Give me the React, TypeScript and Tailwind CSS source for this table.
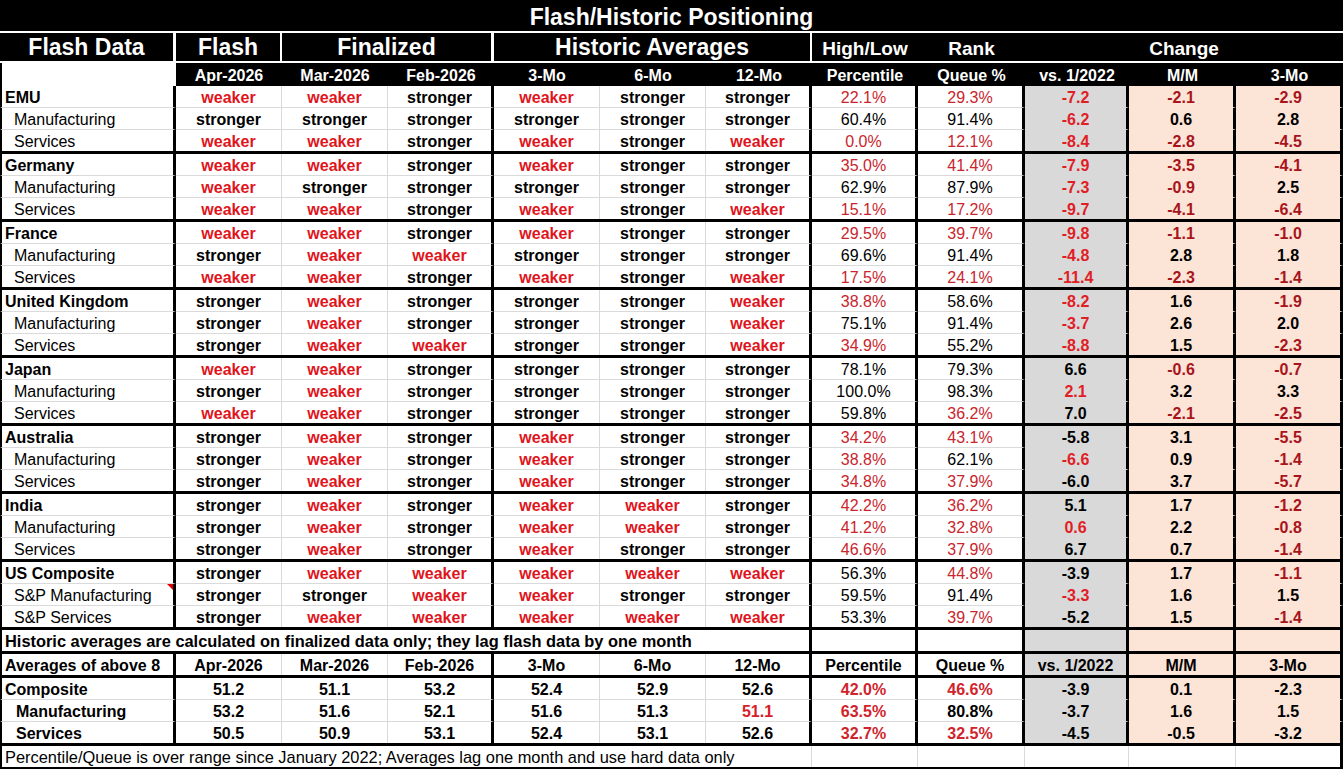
import React from 'react'

// signal codes: s = stronger, w = weaker; a trailing * marks a red number
type Row = [string, string, string, string, string, string, string]

const groups: Row[][] = [
  [
    ['EMU', 'wwswss', '22.1%*', '29.3%*', '-7.2*', '-2.1*', '-2.9*'],
    ['Manufacturing', 'ssssss', '60.4%', '91.4%', '-6.2*', '0.6', '2.8'],
    ['Services', 'wwswsw', '0.0%*', '12.1%*', '-8.4*', '-2.8*', '-4.5*'],
  ],
  [
    ['Germany', 'wwswss', '35.0%*', '41.4%*', '-7.9*', '-3.5*', '-4.1*'],
    ['Manufacturing', 'wsssss', '62.9%', '87.9%', '-7.3*', '-0.9*', '2.5'],
    ['Services', 'wwswsw', '15.1%*', '17.2%*', '-9.7*', '-4.1*', '-6.4*'],
  ],
  [
    ['France', 'wwswss', '29.5%*', '39.7%*', '-9.8*', '-1.1*', '-1.0*'],
    ['Manufacturing', 'swwsss', '69.6%', '91.4%', '-4.8*', '2.8', '1.8'],
    ['Services', 'wwswsw', '17.5%*', '24.1%*', '-11.4*', '-2.3*', '-1.4*'],
  ],
  [
    ['United Kingdom', 'swsssw', '38.8%*', '58.6%', '-8.2*', '1.6', '-1.9*'],
    ['Manufacturing', 'swsssw', '75.1%', '91.4%', '-3.7*', '2.6', '2.0'],
    ['Services', 'swwssw', '34.9%*', '55.2%', '-8.8*', '1.5', '-2.3*'],
  ],
  [
    ['Japan', 'wwssss', '78.1%', '79.3%', '6.6', '-0.6*', '-0.7*'],
    ['Manufacturing', 'swssss', '100.0%', '98.3%', '2.1*', '3.2', '3.3'],
    ['Services', 'wwssss', '59.8%', '36.2%*', '7.0', '-2.1*', '-2.5*'],
  ],
  [
    ['Australia', 'swswss', '34.2%*', '43.1%*', '-5.8', '3.1', '-5.5*'],
    ['Manufacturing', 'swswss', '38.8%*', '62.1%', '-6.6*', '0.9', '-1.4*'],
    ['Services', 'swswss', '34.8%*', '37.9%*', '-6.0', '3.7', '-5.7*'],
  ],
  [
    ['India', 'swswws', '42.2%*', '36.2%*', '5.1', '1.7', '-1.2*'],
    ['Manufacturing', 'swswws', '41.2%*', '32.8%*', '0.6*', '2.2', '-0.8*'],
    ['Services', 'swswss', '46.6%*', '37.9%*', '6.7', '0.7', '-1.4*'],
  ],
  [
    ['US Composite', 'swwwww', '56.3%', '44.8%*', '-3.9', '1.7', '-1.1*'],
    ['S&P Manufacturing', 'sswwss', '59.5%', '91.4%', '-3.3*', '1.6', '1.5'],
    ['S&P Services', 'swwwww', '53.3%', '39.7%*', '-5.2', '1.5', '-1.4*'],
  ],
]

const averages: [string, string[]][] = [
  ['Composite', ['51.2', '51.1', '53.2', '52.4', '52.9', '52.6', '42.0%*', '46.6%*', '-3.9', '0.1', '-2.3']],
  ['Manufacturing', ['53.2', '51.6', '52.1', '51.6', '51.3', '51.1*', '63.5%*', '80.8%', '-3.7', '1.6', '1.5']],
  ['Services', ['50.5', '50.9', '53.1', '52.4', '53.1', '52.6', '32.7%*', '32.5%*', '-4.5', '-0.5', '-3.2']],
]

const subHeads = ['Apr-2026', 'Mar-2026', 'Feb-2026', '3-Mo', '6-Mo', '12-Mo', 'Percentile', 'Queue %', 'vs. 1/2022', 'M/M', '3-Mo']

const gridCols = 'grid grid-cols-[176px_106px_106px_106px_106px_106px_106px_106px_107px_104px_107px_107px]'

const rightBorder = [
  'border-l-2 border-l-black border-r-[3px] border-r-black',
  'border-r border-r-[#d9d9d9]',
  'border-r border-r-[#d9d9d9]',
  'border-r-[3px] border-r-black',
  'border-r border-r-[#d9d9d9]',
  'border-r border-r-[#d9d9d9]',
  'border-r-[3px] border-r-black',
  'border-r-[3px] border-r-black',
  'border-r-[3px] border-r-black',
  'border-r-[3px] border-r-black',
  'border-r-[3px] border-r-black',
  'border-r-[3px] border-r-black',
]

function fill(i: number) {
  if (i === 9) return 'bg-[#d9d9d9]'
  if (i >= 10) return 'bg-[#fce4d6]'
  return 'bg-white'
}

function bottom(i: number, last: boolean) {
  if (last) return ''
  if (i === 9) return 'border-b border-b-[#d9d9d9]'
  if (i >= 10) return 'border-b border-b-[#fce4d6]'
  return 'border-b border-b-[#dadada]'
}

// cells sit a little low, like Excel's bottom-aligned text
function cell(i: number, last: boolean) {
  return `${rightBorder[i]} ${fill(i)} ${bottom(i, last)} flex items-center pt-[3px]`
}

function Num({ v, col, bold }: { v: string; col: number; bold?: boolean }) {
  const red = v.endsWith('*')
  const text = red ? v.slice(0, -1) : v
  let cls = 'font-bold text-black'
  if (col === 6 || col === 7) {
    cls = bold ? (red ? 'font-bold text-[#d0242c]' : 'font-bold text-black') : red ? 'text-[#c9252d]' : 'text-black'
  } else if (col === 8) {
    cls = red ? 'font-bold text-[#e01e26]' : 'font-bold text-black'
  } else if (col >= 9) {
    cls = red ? 'font-bold text-[#a8141c]' : 'font-bold text-black'
  } else if (red) {
    cls = 'font-bold text-[#d8202a]'
  }
  return <span className={cls}>{text}</span>
}

function DataRow({ row, first, last }: { row: Row; first: boolean; last: boolean }) {
  const [label, sig, ...nums] = row
  return (
    <div className={`${gridCols} ${last ? 'h-[21px]' : 'h-[22px]'}`}>
      <div className={`${cell(0, last)} relative ${first ? 'pl-[3px] font-bold' : 'pl-[12px]'}`}>
        {label}
        {label === 'S&P Manufacturing' && (
          <span className="absolute top-0 right-0 h-0 w-0 border-l-[6px] border-t-[6px] border-l-transparent border-t-[#e00000]" />
        )}
      </div>
      {sig.split('').map((s, i) => (
        <div key={i} className={`${cell(i + 1, last)} justify-center font-bold`}>
          {s === 'w' ? <span className="text-[#e0141c]">weaker</span> : <span>stronger</span>}
        </div>
      ))}
      {nums.map((v, i) => (
        <div key={i} className={`${cell(i + 7, last)} justify-center`}>
          <Num v={v} col={i + 6} />
        </div>
      ))}
    </div>
  )
}

export default function App() {
  return (
    <div className="w-[1343px] h-[769px] overflow-hidden bg-white font-['Liberation_Sans',Arial,sans-serif] text-[16px] leading-none text-black">
      {/* title */}
      <div className="flex h-[31px] items-center justify-center bg-black pt-[3px] text-[23px] font-bold text-white">
        Flash/Historic Positioning
      </div>

      {/* header row 1 */}
      <div className={`${gridCols} h-[32px] border-y-2 border-white bg-black font-bold text-white`}>
        <div className="flex items-center justify-center border-r-[3px] border-r-white text-[23px]">Flash Data</div>
        <div className="flex items-center justify-center border-r-2 border-r-white text-[23px]">Flash</div>
        <div className="col-span-2 flex items-center justify-center border-r-[3px] border-r-white text-[23px]">Finalized</div>
        <div className="col-span-3 flex items-center justify-center border-r-2 border-r-white text-[23px]">Historic Averages</div>
        <div className="flex items-center justify-center pt-[2px] text-[19px]">High/Low</div>
        <div className="flex items-center justify-center pt-[2px] text-[19px]">Rank</div>
        <div className="col-span-3 flex items-center justify-center pt-[2px] text-[19px]">Change</div>
      </div>

      {/* header row 2 */}
      <div className={`${gridCols} h-[23px] bg-black font-bold text-white`}>
        <div className="border-l-2 border-l-black bg-white" />
        {subHeads.map((h, i) => (
          <div key={i} className="flex items-center justify-center pt-[2px]">
            {h}
          </div>
        ))}
      </div>

      {/* country groups */}
      {groups.map((g, gi) => (
        <div key={gi} className="border-b-[3px] border-b-black">
          {g.map((row, ri) => (
            <DataRow key={ri} row={row} first={ri === 0} last={ri === g.length - 1} />
          ))}
        </div>
      ))}

      {/* note */}
      <div className={`${gridCols} h-[24px] border-b-[3px] border-b-black`}>
        <div className="col-span-7 flex items-center whitespace-nowrap border-l-2 border-r-[3px] border-l-black border-r-black pl-[3px] pt-[2px] text-[16.4px] font-bold">
          Historic averages are calculated on finalized data only; they lag flash data by one month
        </div>
        {[7, 8, 9, 10, 11].map((i) => (
          <div key={i} className={cell(i, true)} />
        ))}
      </div>

      {/* averages header */}
      <div className={`${gridCols} h-[24px] border-b-[3px] border-b-black font-bold`}>
        <div className={`${cell(0, true)} pl-[3px]`}>Averages of above 8</div>
        {subHeads.map((h, i) => (
          <div key={i} className={`${cell(i + 1, true)} justify-center`}>
            {h}
          </div>
        ))}
      </div>

      {/* averages */}
      <div className="border-b-[3px] border-b-black">
        {averages.map(([label, vals], ri) => {
          const last = ri === averages.length - 1
          return (
            <div key={ri} className={`${gridCols} ${last ? 'h-[21px]' : 'h-[22px]'}`}>
              <div className={`${cell(0, last)} font-bold ${ri === 0 ? 'pl-[3px]' : 'pl-[14px]'}`}>{label}</div>
              {vals.map((v, i) => (
                <div key={i} className={`${cell(i + 1, last)} justify-center`}>
                  <Num v={v} col={i} bold />
                </div>
              ))}
            </div>
          )
        })}
      </div>

      {/* footnote */}
      <div className={`${gridCols} h-[23px] border-b-2 border-b-black`}>
        <div className="col-span-7 flex items-center whitespace-nowrap border-l-2 border-r border-l-black border-r-[#d9d9d9] pl-[3px] pt-[2px] text-[16.4px]">
          Percentile/Queue is over range since January 2022; Averages lag one month and use hard data only
        </div>
        <div className="border-r border-r-[#d9d9d9]" />
        <div className="border-r border-r-[#d9d9d9]" />
        <div className="border-r border-r-[#d9d9d9]" />
        <div className="border-r border-r-[#d9d9d9]" />
        <div className="border-r-[3px] border-r-black" />
      </div>
    </div>
  )
}
